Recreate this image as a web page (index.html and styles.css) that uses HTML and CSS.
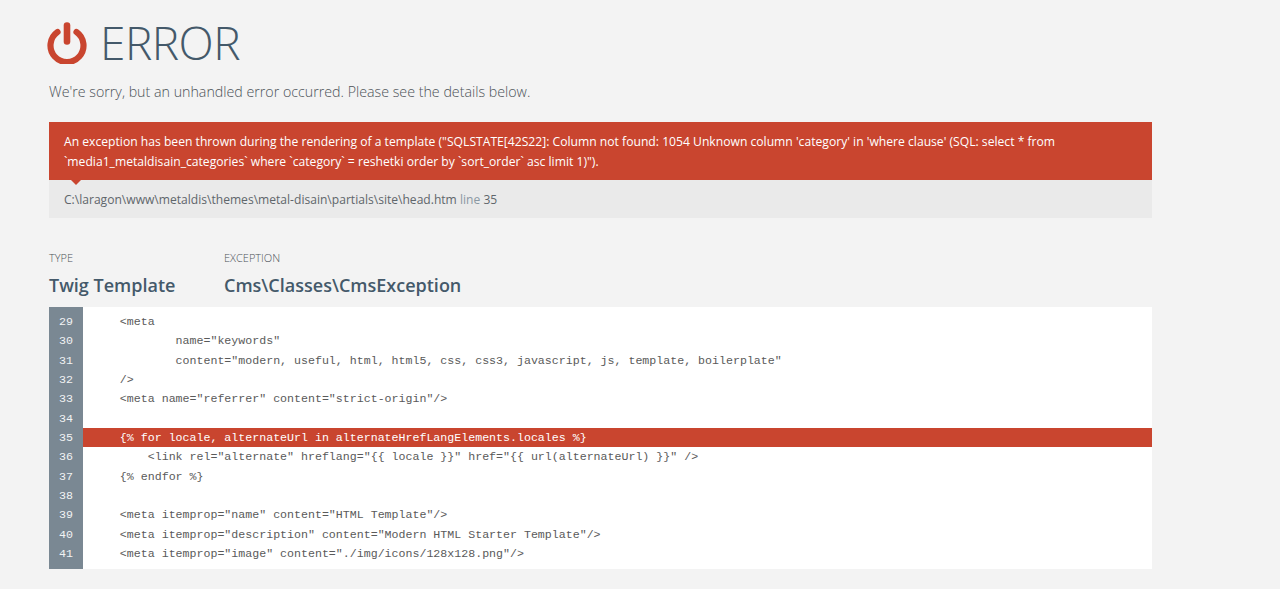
FILE: index.html
```html
<!DOCTYPE html>
<html lang="en">
<head>
<meta charset="utf-8">
<title>Error</title>
<link rel="stylesheet" href="styles.css">
</head>
<body>
<main class="page">
  <h1 class="title">
    <svg class="power" viewBox="0 0 40 42" width="40" height="42" aria-hidden="true">
      <path d="M10.5 10 A16.5 16.5 0 1 0 29.5 10" fill="none" stroke="#c9452f" stroke-width="6.2" stroke-linecap="round"/>
      <path d="M20 3.5 V19.5" fill="none" stroke="#c9452f" stroke-width="6.6" stroke-linecap="round"/>
    </svg>
    <span class="title-text">ERROR</span>
  </h1>
  <p class="lead">We're sorry, but an unhandled error occurred. Please see the details below.</p>
  <div class="message">An exception has been thrown during the rendering of a template ("SQLSTATE[42S22]: Column not found: 1054 Unknown column 'category' in 'where clause' (SQL: select * from `media1_metaldisain_categories` where `category` = reshetki order by `sort_order` asc limit 1)").</div>
  <div class="location">C:\laragon\www\metaldis\themes\metal-disain\partials\site\head.htm <span class="line-label">line</span> 35</div>
  <div class="meta">
    <div class="meta-col meta-type">
      <div class="meta-label">TYPE</div>
      <div class="meta-value">Twig Template</div>
    </div>
    <div class="meta-col">
      <div class="meta-label">EXCEPTION</div>
      <div class="meta-value">Cms\Classes\CmsException</div>
    </div>
  </div>
  <div class="code">
    <div class="gutter"><div class="num">29</div><div class="num">30</div><div class="num">31</div><div class="num">32</div><div class="num">33</div><div class="num">34</div><div class="num">35</div><div class="num">36</div><div class="num">37</div><div class="num">38</div><div class="num">39</div><div class="num">40</div><div class="num">41</div></div>
    <div class="lines">
      <div class="src">    &lt;meta</div>
      <div class="src">            name="keywords"</div>
      <div class="src">            content="modern, useful, html, html5, css, css3, javascript, js, template, boilerplate"</div>
      <div class="src">    /&gt;</div>
      <div class="src">    &lt;meta name="referrer" content="strict-origin"/&gt;</div>
      <div class="src"></div>
      <div class="src active">    {% for locale, alternateUrl in alternateHrefLangElements.locales %}</div>
      <div class="src">        &lt;link rel="alternate" hreflang="{{ locale }}" href="{{ url(alternateUrl) }}" /&gt;</div>
      <div class="src">    {% endfor %}</div>
      <div class="src"></div>
      <div class="src">    &lt;meta itemprop="name" content="HTML Template"/&gt;</div>
      <div class="src">    &lt;meta itemprop="description" content="Modern HTML Starter Template"/&gt;</div>
      <div class="src">    &lt;meta itemprop="image" content="./img/icons/128x128.png"/&gt;</div>
    </div>
  </div>
</main>
</body>
</html>
```
FILE: styles.css
```css
* { box-sizing: border-box; }
html, body { margin: 0; height: 100%; overflow: hidden; }
body {
  background: #f3f3f3;
  color: #4f5f6b;
  font-family: "Open Sans", "Liberation Sans", sans-serif;
}
.page {
  width: 1103px;
  margin-left: 49px;
  padding-top: 21px;
}
.title {
  display: flex;
  align-items: center;
  gap: 13px;
  height: 44px;
  margin: 0;
  font-size: 46px;
  font-weight: 300;
  line-height: 44px;
  letter-spacing: -0.5px;
  color: #44596a;
}
.title-text { margin-top: -2px; }
.power { flex: none; margin-left: -2px; }
.lead {
  margin: 17px 0 0;
  font-size: 14.24px;
  font-weight: 300;
  line-height: 20px;
  color: #4c5258;
}
.message {
  position: relative;
  height: 58px;
  margin-top: 20px;
  padding: 10px 15px 0;
  background: #c9452f;
  color: #fff;
  font-size: 12.15px;
  line-height: 20px;
}
.message::after {
  content: "";
  position: absolute;
  left: 22px;
  bottom: -5px;
  border-style: solid;
  border-width: 5px 5px 0;
  border-color: #c9452f transparent transparent;
}
.location {
  height: 38px;
  padding: 0 15px;
  background: #eaeaea;
  color: #5f666b;
  font-size: 12.08px;
  line-height: 39px;
}
.line-label { color: #8a98a3; }
.meta {
  display: flex;
  margin-top: 32px;
}
.meta-type { width: 175px; }
.meta-label {
  font-size: 11px;
  font-weight: 300;
  line-height: 16px;
  color: #4c5258;
}
.meta-value {
  margin-top: 6px;
  font-size: 18px;
  font-weight: 600;
  line-height: 26px;
  color: #44596a;
}
.code {
  display: flex;
  height: 262px;
  margin-top: 9px;
  background: #fff;
  font-family: "Liberation Mono", monospace;
  font-size: 11.62px;
  line-height: 19.35px;
}
.gutter {
  flex: none;
  width: 34px;
  padding: 5px 0 0 10px;
  background: #7a8893;
  color: #f1f3f4;
}
.lines {
  flex: 1;
  padding-top: 5px;
  color: #5a5a5a;
}
.num, .src { height: 19.35px; }
.src { padding-left: 9px; white-space: pre; }
.active {
  background: #c9452f;
  color: #fff;
}
```
